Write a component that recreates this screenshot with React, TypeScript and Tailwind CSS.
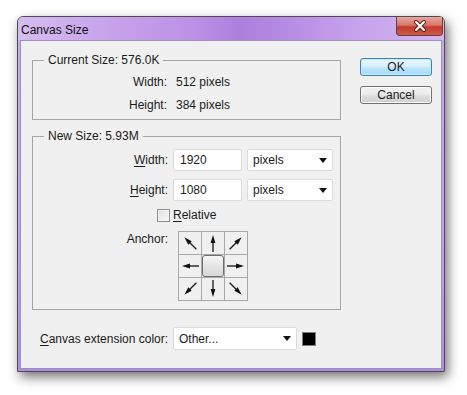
import React from 'react';
import clsx from 'clsx';

const Arrow: React.FC<{ angle: number }> = ({ angle }) => (
  <svg width="22" height="22" viewBox="0 0 22 22">
    <g transform={`rotate(${angle} 11 11)`}>
      <line x1="11" y1="20" x2="11" y2="9" stroke="#222" strokeWidth="1.4" />
      <polygon points="11,3 8.6,11 13.4,11" fill="#111" />
    </g>
  </svg>
);

const Dropdown: React.FC<{ value: string; className?: string }> = ({ value, className }) => (
  <div
    className={clsx(
      'flex items-center justify-between rounded-[2px] border border-[#dadada] bg-white pl-[5px] pr-[5px]',
      className
    )}
  >
    <span>{value}</span>
    <svg width="8" height="5" viewBox="0 0 8 5">
      <polygon points="0,0 8,0 4,5" fill="#111" />
    </svg>
  </div>
);

const anchorAngles = [-45, 0, 45, -90, null, 90, -135, 180, 135];

export default function App() {
  return (
    <div className="min-h-screen bg-white pl-[17px] pt-[16px] font-['Liberation_Sans',Arial,sans-serif] text-[12px] leading-[14px] text-[#1b1b1b]">
      <div className="flex h-[356px] w-[428px] flex-col rounded-t-[6px] border border-[#4f4a57] bg-[linear-gradient(180deg,#c9aaeb_0%,#c2a3ea_60%,#ab8edf_100%)] shadow-[3px_5px_12px_rgba(0,0,0,0.55)]">
        {/* title bar */}
        <div className="flex h-[23px] items-start justify-between rounded-t-[5px] bg-[linear-gradient(90deg,#d6bdf0_0%,#c9a6ec_18%,#bd92e6_40%,#ad7fdd_52%,#b58ae2_62%,#c7a3ec_80%,#d3b6ef_100%)]">
          <span className="pl-[3px] pt-[6px] text-[12px] text-[#101010]">Canvas Size</span>
          <button className="mr-[1px] flex h-[19px] w-[47px] items-center justify-center rounded-b-[4px] border border-t-0 border-[#6b3a3a] bg-[linear-gradient(180deg,#e9a69c_0%,#d9766a_45%,#c23a2c_55%,#cf5a48_100%)]">
            <svg width="14" height="12" viewBox="0 0 14 12">
              <path d="M3 2 L11 10 M11 2 L3 10" stroke="#5a2620" strokeWidth="4" strokeLinecap="round" />
              <path d="M3 2 L11 10 M11 2 L3 10" stroke="#fff" strokeWidth="2" strokeLinecap="round" />
            </svg>
          </button>
        </div>

        {/* client */}
        <div className="mx-[2px] mb-[2px] flex flex-1 flex-col border border-[#9f8fbb] bg-[#f0f0f0]">
          <div className="flex">
            <div className="flex flex-col pl-[11px] pt-[12px]">
              <fieldset className="h-[67px] w-[309px] border border-[#a5a5a5] px-0 pb-[3px] pt-[3px]">
                <legend className="ml-[11px] px-[4px] leading-[14px]">Current Size: 576.0K</legend>
                <div className="flex h-[23px] items-center">
                  <span className="w-[134px] text-right">Width:</span>
                  <span className="pl-[9px]">512 pixels</span>
                </div>
                <div className="flex h-[23px] items-center">
                  <span className="w-[134px] text-right">Height:</span>
                  <span className="pl-[9px]">384 pixels</span>
                </div>
              </fieldset>

              <fieldset className="mt-[9px] h-[181px] w-[309px] border border-[#a5a5a5] px-0 pb-[8px] pt-0">
                <legend className="ml-[11px] px-[4px] leading-[14px]">New Size: 5.93M</legend>
                <div className="mt-[6px] flex h-[22px] items-center gap-[5px]">
                  <span className="w-[135px] text-right">
                    <u className="underline-offset-2">W</u>idth:
                  </span>
                  <div className="flex h-[22px] w-[69px] items-center rounded-[2px] border border-[#dadada] bg-white pl-[6px]">
                    1920
                  </div>
                  <Dropdown value="pixels" className="h-[22px] w-[86px]" />
                </div>
                <div className="mt-[8px] flex h-[22px] items-center gap-[5px]">
                  <span className="w-[135px] text-right">
                    <u className="underline-offset-2">H</u>eight:
                  </span>
                  <div className="flex h-[22px] w-[69px] items-center rounded-[2px] border border-[#dadada] bg-white pl-[6px]">
                    1080
                  </div>
                  <Dropdown value="pixels" className="h-[22px] w-[86px]" />
                </div>
                <div className="mt-[6px] flex h-[16px] items-center gap-[3px] pl-[124px]">
                  <span className="h-[13px] w-[13px] border border-[#8e8f8f] bg-[linear-gradient(135deg,#dcdcdc,#fbfbfb)] shadow-[inset_0_0_0_1px_#f4f4f4]" />
                  <span>
                    <u className="underline-offset-2">R</u>elative
                  </span>
                </div>
                <div className="mt-[8px] flex items-start gap-[10px]">
                  <span className="w-[135px] pt-[1px] text-right">Anchor:</span>
                  <div className="grid grid-cols-[repeat(3,22px)] gap-px bg-[#a8a8a8] p-px">
                    {anchorAngles.map((angle, i) => (
                      <div key={i} className="flex h-[22px] w-[22px] items-center justify-center bg-[#f0f0f0]">
                        {angle === null ? (
                          <div className="h-[22px] w-[22px] rounded-[3px] border border-[#6e6e6e] bg-[linear-gradient(180deg,#f7f7f7_0%,#e4e4e4_50%,#d8d8d8_100%)]" />
                        ) : (
                          <Arrow angle={angle} />
                        )}
                      </div>
                    ))}
                  </div>
                </div>
              </fieldset>
            </div>

            <div className="ml-[19px] flex flex-col gap-[10px] pt-[17px]">
              <button className="h-[18px] w-[72px] rounded-[3px] border border-[#3c7fb1] bg-[linear-gradient(180deg,#eaf6fd_0%,#d9f0fc_45%,#bee6fd_55%,#a7d9f5_100%)] text-[12px] leading-[14px] shadow-[inset_0_0_0_1px_#c6ecfd]">
                OK
              </button>
              <button className="h-[18px] w-[72px] rounded-[3px] border border-[#707070] bg-[linear-gradient(180deg,#f2f2f2_0%,#ebebeb_45%,#dddddd_55%,#cfcfcf_100%)] text-[12px] leading-[14px] shadow-[inset_0_0_0_1px_#fcfcfc]">
                Cancel
              </button>
            </div>
          </div>

          <div className="mt-[17px] flex items-center pl-[19px]">
            <span className="w-[133px]">
              <u className="underline-offset-2">C</u>anvas extension color:
            </span>
            <Dropdown value="Other..." className="h-[23px] w-[124px]" />
            <span className="ml-[5px] h-[14px] w-[14px] border border-[#7d7d7d] bg-black" />
          </div>
        </div>
      </div>
    </div>
  );
}
